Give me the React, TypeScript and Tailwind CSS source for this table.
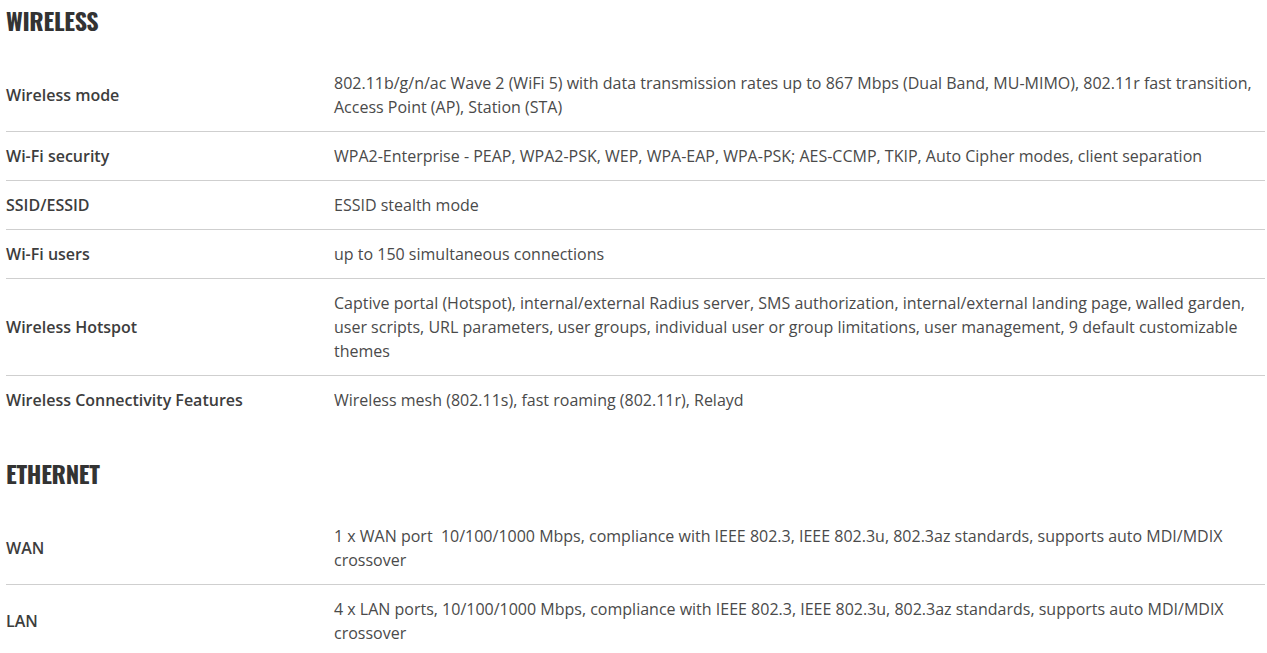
import React from 'react';

interface SpecRow {
  label: string;
  value: string;
}

interface SpecSection {
  title: string;
  rows: SpecRow[];
}

const sections: SpecSection[] = [
  {
    title: 'WIRELESS',
    rows: [
      {
        label: 'Wireless mode',
        value:
          '802.11b/g/n/ac Wave 2 (WiFi 5) with data transmission rates up to 867 Mbps (Dual Band, MU-MIMO), 802.11r fast transition, Access Point (AP), Station (STA)',
      },
      {
        label: 'Wi-Fi security',
        value:
          'WPA2-Enterprise - PEAP, WPA2-PSK, WEP, WPA-EAP, WPA-PSK; AES-CCMP, TKIP, Auto Cipher modes, client separation',
      },
      { label: 'SSID/ESSID', value: 'ESSID stealth mode' },
      { label: 'Wi-Fi users', value: 'up to 150 simultaneous connections' },
      {
        label: 'Wireless Hotspot',
        value:
          'Captive portal (Hotspot), internal/external Radius server, SMS authorization, internal/external landing page, walled garden, user scripts, URL parameters, user groups, individual user or group limitations, user management, 9 default customizable themes',
      },
      {
        label: 'Wireless Connectivity Features',
        value: 'Wireless mesh (802.11s), fast roaming (802.11r), Relayd',
      },
    ],
  },
  {
    title: 'ETHERNET',
    rows: [
      {
        label: 'WAN',
        value:
          '1 x WAN port  10/100/1000 Mbps, compliance with IEEE 802.3, IEEE 802.3u, 802.3az standards, supports auto MDI/MDIX crossover',
      },
      {
        label: 'LAN',
        value:
          '4 x LAN ports, 10/100/1000 Mbps, compliance with IEEE 802.3, IEEE 802.3u, 802.3az standards, supports auto MDI/MDIX crossover',
      },
    ],
  },
];

const Section: React.FC<{ section: SpecSection; first?: boolean }> = ({ section, first }) => (
  <section className={first ? '' : 'mt-[29px]'}>
    <h2
      className="h-[40px] flex items-center text-[24px] font-bold leading-none text-[#333] tracking-[-0.3px]"
      style={{ fontFamily: '"Oswald", "Liberation Sans Narrow", "DejaVu Sans", sans-serif', fontStretch: 'condensed' }}
    >
      {section.title}
    </h2>
    <div className="mt-[19px]">
      {section.rows.map((row, i) => (
        <div
          key={row.label}
          className={`grid grid-cols-[328px_1fr] py-3 ${i < section.rows.length - 1 ? 'border-b border-[#cfcfcf]' : ''}`}
        >
          <div className="flex items-center font-semibold text-[#3d3d3d]">{row.label}</div>
          <div className="text-[#4a4a4a] whitespace-pre-wrap">{row.value}</div>
        </div>
      ))}
    </div>
  </section>
);

export default function App() {
  return (
    <div
      className="bg-white min-h-screen pl-[6px] pr-[2px] text-[16px] leading-6"
      style={{ fontFamily: '"Open Sans", "Liberation Sans", sans-serif' }}
    >
      {sections.map((s, i) => (
        <Section key={s.title} section={s} first={i === 0} />
      ))}
    </div>
  );
}
